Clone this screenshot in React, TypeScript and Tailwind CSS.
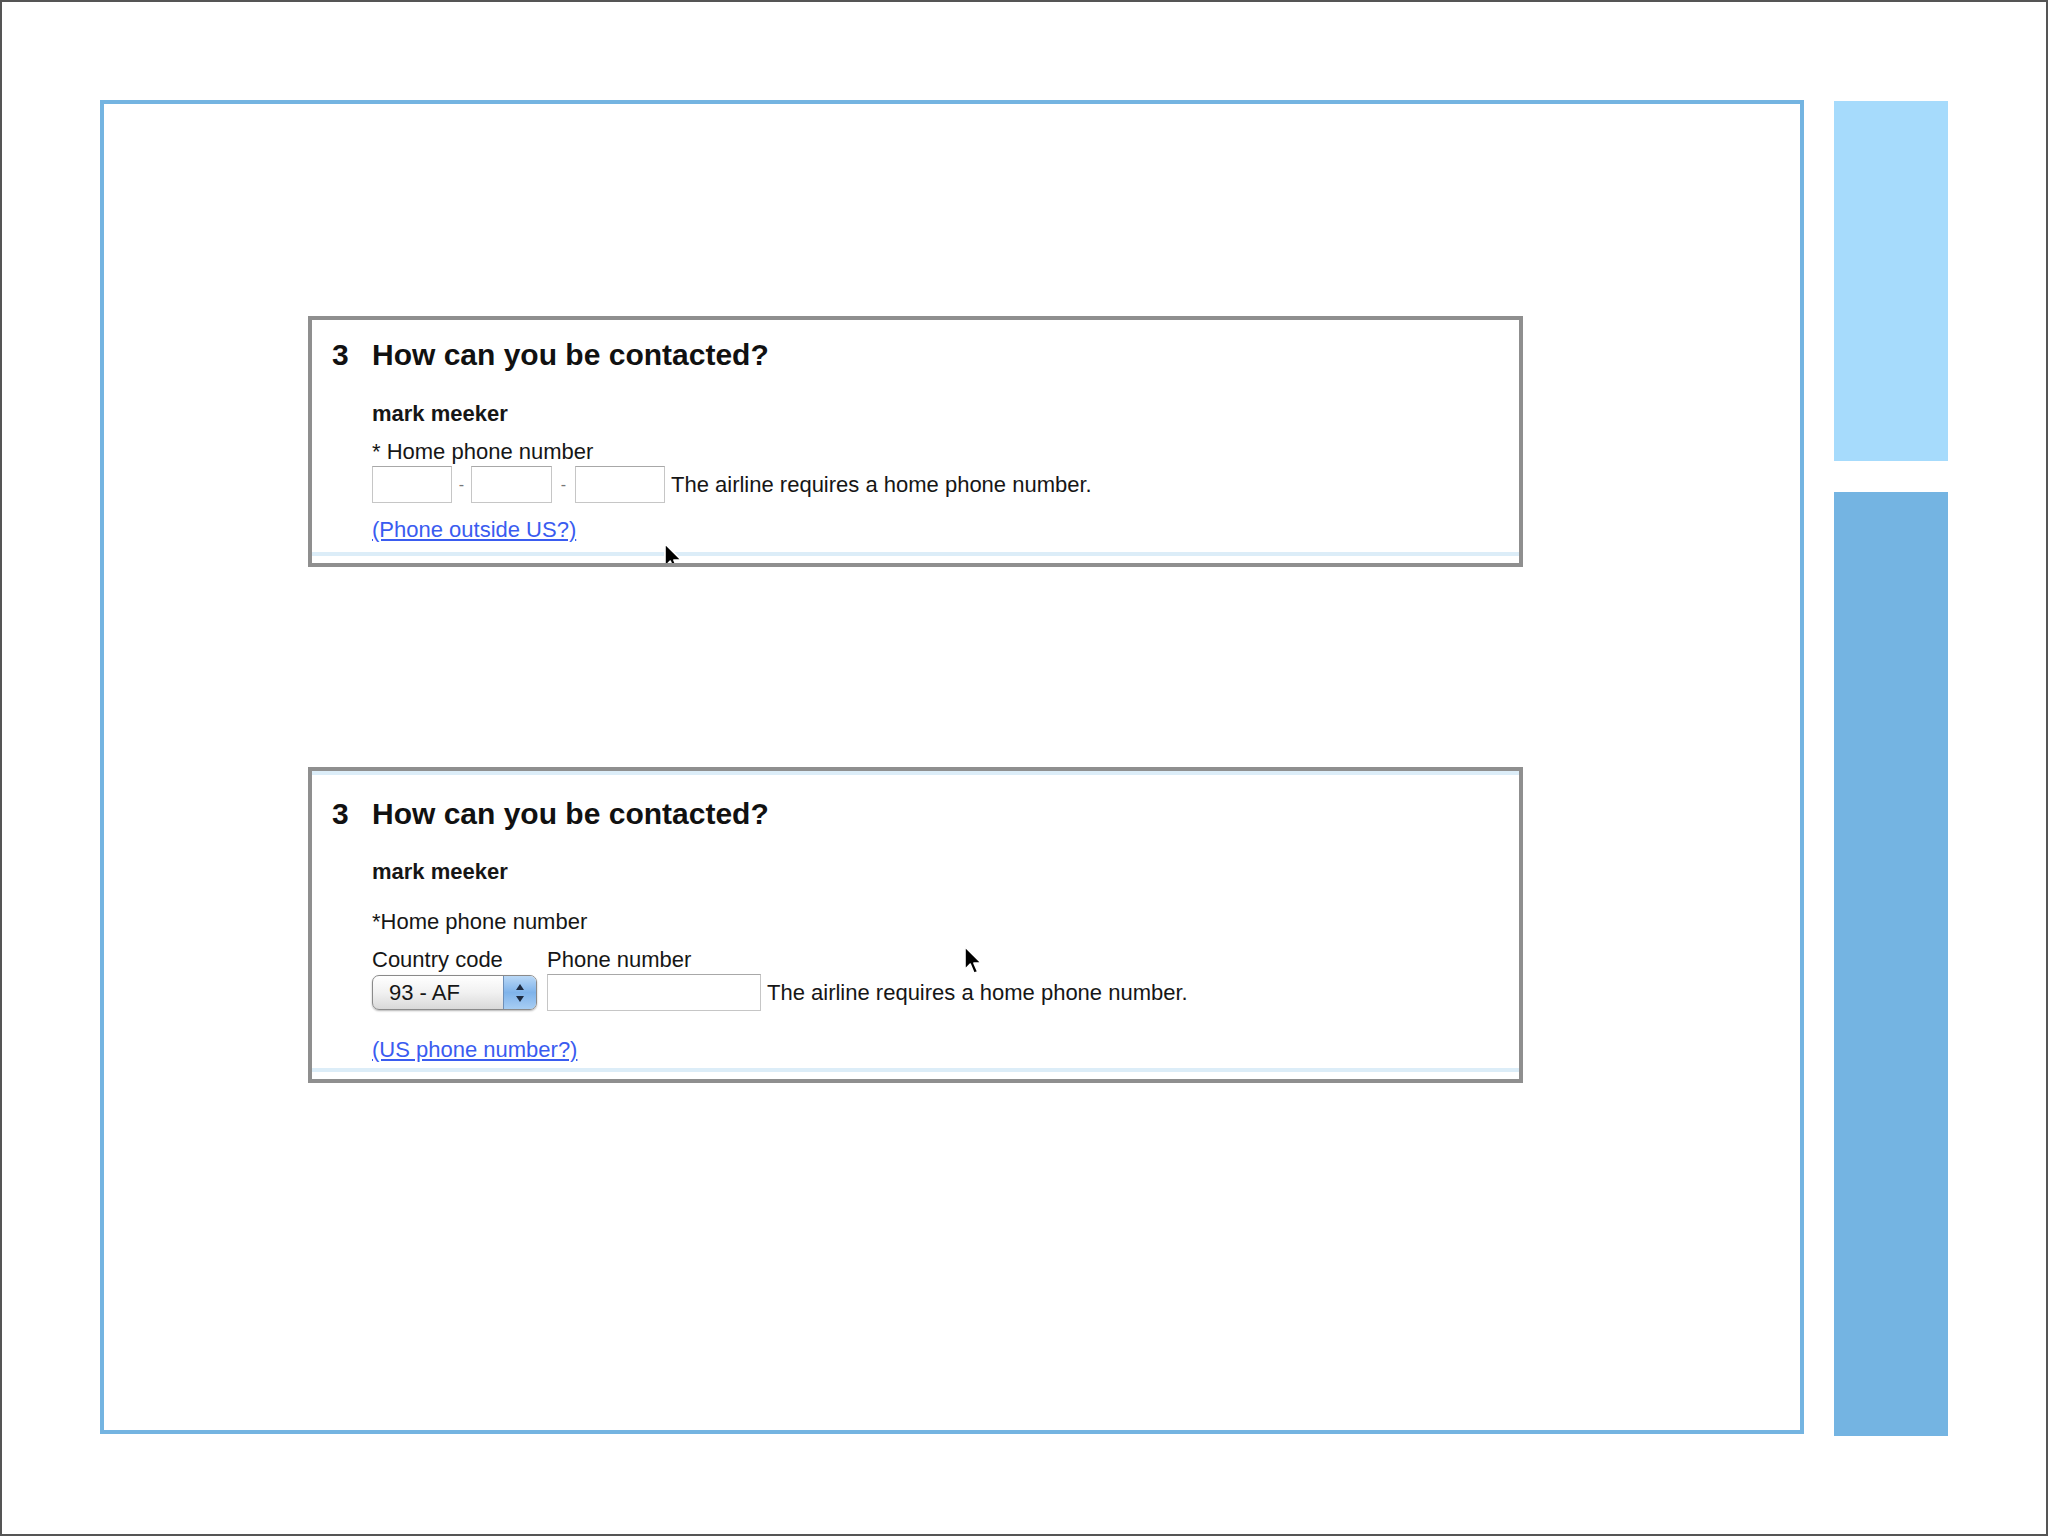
import type { ReactNode } from "react";

const font = { fontFamily: '"Liberation Sans", Arial, Helvetica, sans-serif' };

function Cursor({ className }: { className: string }) {
  return (
    <svg className={`absolute ${className}`} width="22" height="32" viewBox="0 0 20 30">
      <path d="M1.5 1.5 L1.5 23 L6.5 18 L10 26.5 L13.5 25 L10 17 L17 17 Z" fill="#000" stroke="#fff" strokeWidth="1.6" strokeLinejoin="round" />
    </svg>
  );
}

function Heading() {
  return (
    <div className="flex items-center pl-[20px] text-[30px] leading-[36px] font-bold text-[#111]">
      <span className="w-[40px]">3</span>
      <span>How can you be contacted?</span>
    </div>
  );
}

function Input({ w }: { w: string }) {
  return <div className={`${w} h-[37px] border border-[#c6c6c6] border-t-[#a8a8a8] bg-white`} />;
}

function Panel({ children, topLine }: { children: ReactNode; topLine?: boolean }) {
  return (
    <div className="relative flex h-full w-[1215px] flex-col overflow-hidden border-4 border-[#8f8f8f] bg-white">
      {topLine && <div className="h-[4px] bg-[#dcedf8]" />}
      {children}
      <div className="mt-auto mb-[7px] h-[4px] bg-[#dcedf8]" />
    </div>
  );
}

export default function App() {
  return (
    <div style={font} className="flex h-[1536px] w-[2048px] border-2 border-[#555] bg-white pl-[98px] pt-[98px] text-[22px] text-[#161616]">
      <div className="flex h-[1334px] w-[1704px] flex-col border-4 border-[#74b4e1] pl-[204px] pt-[212px]">
        <div className="h-[251px]">
          <Panel>
            <div className="pt-[17px]">
              <Heading />
              <div className="pl-[60px]">
                <div className="mt-[28px] font-bold leading-[26px]">mark meeker</div>
                <div className="mt-[12px] leading-[26px]">* Home phone number</div>
                <div className="mt-[1px] flex items-center">
                  <Input w="w-[80px]" />
                  <span className="w-[19px] text-center text-[16px] text-[#777]">-</span>
                  <Input w="w-[81px]" />
                  <span className="w-[23px] text-center text-[16px] text-[#777]">-</span>
                  <Input w="w-[90px]" />
                  <span className="ml-[6px]">The airline requires a home phone number.</span>
                </div>
                <div className="mt-[14px] leading-[26px] text-[#3a5cf0] underline">(Phone outside US?)</div>
              </div>
            </div>
            <Cursor className="left-[351px] top-[222px]" />
          </Panel>
        </div>
        <div className="mt-[200px] h-[316px]">
          <Panel topLine>
            <div className="pt-[21px]">
              <Heading />
              <div className="pl-[60px]">
                <div className="mt-[27px] font-bold leading-[26px]">mark meeker</div>
                <div className="mt-[24px] leading-[26px]">*Home phone number</div>
                <div className="mt-[12px] flex leading-[26px]">
                  <span className="w-[175px]">Country code</span>
                  <span>Phone number</span>
                </div>
                <div className="mt-[1px] flex items-center">
                  <div className="flex h-[35px] w-[165px] overflow-hidden rounded-[7px] border border-[#8a8a8a] bg-gradient-to-b from-white via-[#f1f1f1] to-[#d9d9d9] shadow-[0_1px_2px_rgba(0,0,0,0.3)]">
                    <span className="flex-1 pl-[16px] leading-[33px]">93 - AF</span>
                    <div className="flex w-[33px] flex-col items-center justify-center border-l border-[#6d8fb8] bg-gradient-to-b from-[#b9d8f6] via-[#7fb3ea] to-[#a7cdf3]">
                      <svg width="10" height="22" viewBox="0 0 10 22">
                        <path d="M5 2 L9 8 L1 8 Z" fill="#1d2a40" />
                        <path d="M5 20 L9 14 L1 14 Z" fill="#1d2a40" />
                      </svg>
                    </div>
                  </div>
                  <div className="ml-[10px] h-[37px] w-[214px] border border-[#c6c6c6] border-t-[#a8a8a8] bg-white" />
                  <span className="ml-[6px]">The airline requires a home phone number.</span>
                </div>
                <div className="mt-[26px] leading-[26px] text-[#3a5cf0] underline">(US phone number?)</div>
              </div>
            </div>
            <Cursor className="left-[651px] top-[174px]" />
          </Panel>
        </div>
      </div>
      <div className="ml-[30px] flex h-[1336px] w-[114px] flex-col pt-[1px]">
        <div className="h-[360px] bg-[#a6dbfc]" />
        <div className="mt-[31px] flex-1 bg-[#74b4e2]" />
      </div>
    </div>
  );
}
